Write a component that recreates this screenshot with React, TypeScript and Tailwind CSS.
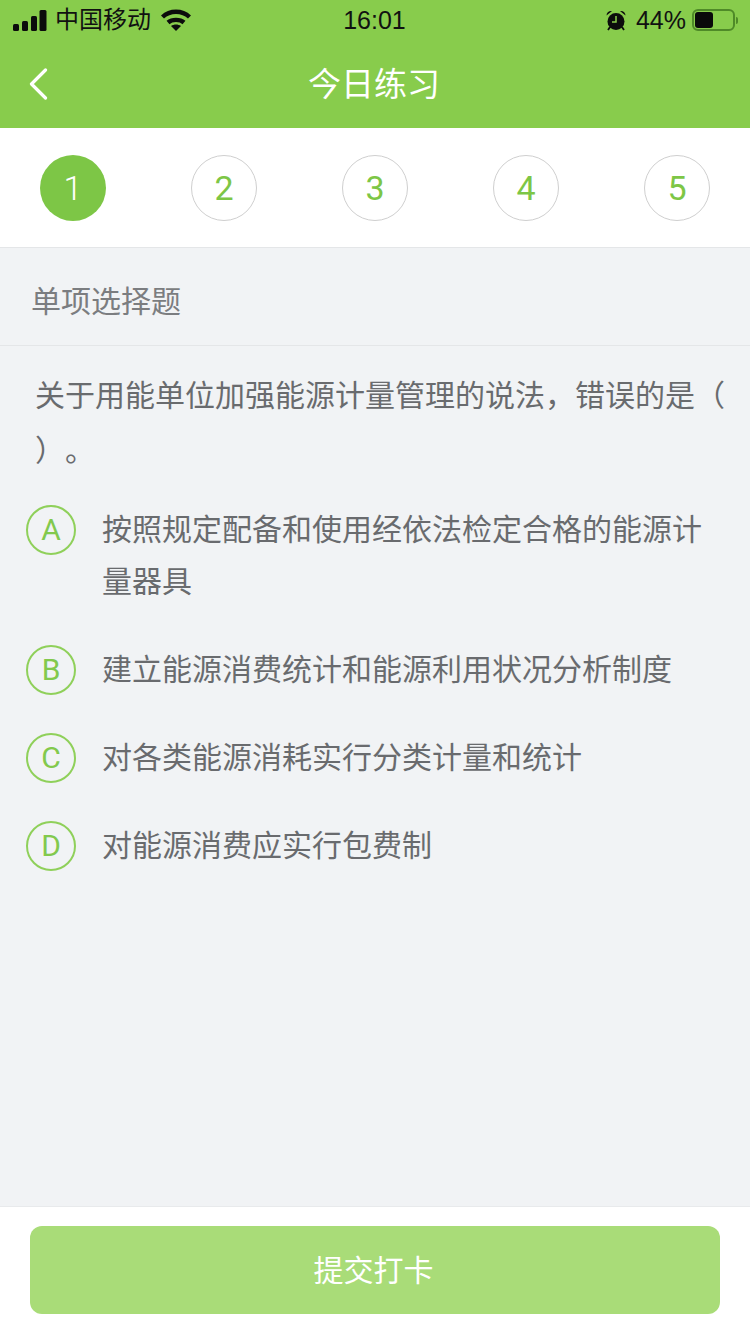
const FONT = 'font-["Liberation_Sans","Noto_Sans_CJK_SC",sans-serif]';
const DIGIT_FONT = 'font-["Roboto","Liberation_Sans",sans-serif]';

const STEPS = [1, 2, 3, 4, 5];

const OPTIONS = [
  { key: 'A', text: '按照规定配备和使用经依法检定合格的能源计量器具' },
  { key: 'B', text: '建立能源消费统计和能源利用状况分析制度' },
  { key: 'C', text: '对各类能源消耗实行分类计量和统计' },
  { key: 'D', text: '对能源消费应实行包费制' },
];

function SignalIcon() {
  return (
    <svg width="34" height="21" viewBox="0 0 34 21" fill="#0c0c0c">
      <rect x="0" y="14" width="6" height="7" rx="1.5" />
      <rect x="9" y="11" width="6" height="10" rx="1.5" />
      <rect x="18" y="6" width="6" height="15" rx="1.5" />
      <rect x="26.5" y="0" width="7" height="21" rx="1.5" />
    </svg>
  );
}

function WifiIcon() {
  return (
    <svg width="30" height="22" viewBox="0 0 30 22" fill="none" stroke="#0c0c0c" strokeWidth="4.4">
      <path d="M1.5 8C9 1 21 1 28.5 8" />
      <path d="M7 13.5C11 10 19 10 23 13.5" />
      <path d="M15 22L10 17C13 15 17 15 20 17Z" fill="#0c0c0c" stroke="none" />
    </svg>
  );
}

function AlarmIcon() {
  return (
    <svg width="20" height="21" viewBox="0 0 20 21" fill="#0c0c0c">
      <circle cx="10" cy="11.5" r="8.5" />
      <path d="M0.5 5.5C0.5 2.5 3 0.5 6 1Z" />
      <path d="M19.5 5.5C19.5 2.5 17 0.5 14 1Z" />
      <path d="M4 17L2 20M16 17L18 20" stroke="#0c0c0c" strokeWidth="1.8" />
      <path d="M10 6V12H6" stroke="#8acd4c" strokeWidth="1.5" fill="none" />
    </svg>
  );
}

function BackIcon() {
  return (
    <svg width="20" height="32" viewBox="0 0 20 32" fill="none" stroke="#fff" strokeWidth="3.2" strokeLinecap="round" strokeLinejoin="round">
      <path d="M16.5 2L2.5 16L16.5 30" />
    </svg>
  );
}

function BatteryIcon() {
  return (
    <div className="flex items-center gap-[1px]">
      <div className="flex h-[22px] w-[43px] items-center rounded-[6px] border-2 border-[#4f8a28] p-[1px]">
        <div className="h-full w-[18px] rounded-[3px] bg-[#0a0a0a]" />
      </div>
      <div className="h-[7px] w-[2px] rounded-r-sm bg-[#4f8a28]" />
    </div>
  );
}

function StatusBar() {
  return (
    <div className="grid h-[40px] grid-cols-3 items-center pl-[13px] pr-[12px] text-[#111]">
      <div className="flex items-center">
        <SignalIcon />
        <span className="ml-[8px] text-[24px] leading-none">中国移动</span>
        <span className="ml-[10px]"><WifiIcon /></span>
      </div>
      <div className="pr-[2px] text-center text-[25px] leading-none font-medium">16:01</div>
      <div className="flex items-center justify-end">
        <AlarmIcon />
        <span className="ml-[10px] mr-[6px] text-[25px] leading-none">44%</span>
        <BatteryIcon />
      </div>
    </div>
  );
}

export default function App() {
  return (
    <div className={`${FONT} flex h-[1334px] w-[750px] flex-col overflow-hidden bg-[#f1f3f5]`}>
      <header className="h-[128px] bg-[#88cc4c]">
        <StatusBar />
        <div className="relative flex h-[88px] items-center justify-center">
          <span className="absolute left-[29px] top-[28px]"><BackIcon /></span>
          <h1 className="pr-[2px] pt-[2px] text-[33px] text-white">今日练习</h1>
        </div>
      </header>

      <div className={`${DIGIT_FONT} flex h-[120px] items-start justify-between border-b border-[#e4e6e8] bg-white px-[40px] pt-[27px]`}>
        {STEPS.map((step) => (
          <div
            key={step}
            className={`flex h-[66px] w-[66px] items-center justify-center rounded-full text-[34px] ${
              step === 1
                ? 'bg-[#7dc646] font-light text-white'
                : 'border border-[#cfcfcf] bg-white text-[#7dc646]'
            }`}
          >
            {step}
          </div>
        ))}
      </div>

      <div className="flex h-[98px] items-center border-b border-[#e4e6e8] pl-[31px] pt-[10px] text-[30px] text-[#7b7d80]">
        单项选择题
      </div>

      <main className="flex-1 pl-[26px] pr-[20px]">
        <p className="mt-[22px] pl-[9px] text-[30px] leading-[55px] text-[#696b6e] [text-spacing-trim:space-all]">
          关于用能单位加强能源计量管理的说法，错误的是（ ）。
        </p>
        <ul className="mt-[26px] flex flex-col">
          {OPTIONS.map((option) => (
            <li key={option.key} className="flex items-start pb-[36px]">
              <span className={`${DIGIT_FONT} mt-[1px] flex h-[50px] w-[50px] shrink-0 items-center justify-center rounded-full border-2 border-[#8fd05a] text-[30px] leading-none text-[#82c94d]`}>
                {option.key}
              </span>
              <span className="ml-[26px] text-[30px] leading-[52px] text-[#696b6e]">{option.text}</span>
            </li>
          ))}
        </ul>
      </main>

      <footer className="flex h-[128px] items-start border-t border-[#e8eaec] bg-white px-[30px] pt-[19px]">
        <button
          type="button"
          className="h-[88px] w-full rounded-[12px] bg-[#a9dc78] pr-[3px] text-[30px] text-white"
        >
          提交打卡
        </button>
      </footer>
    </div>
  );
}
